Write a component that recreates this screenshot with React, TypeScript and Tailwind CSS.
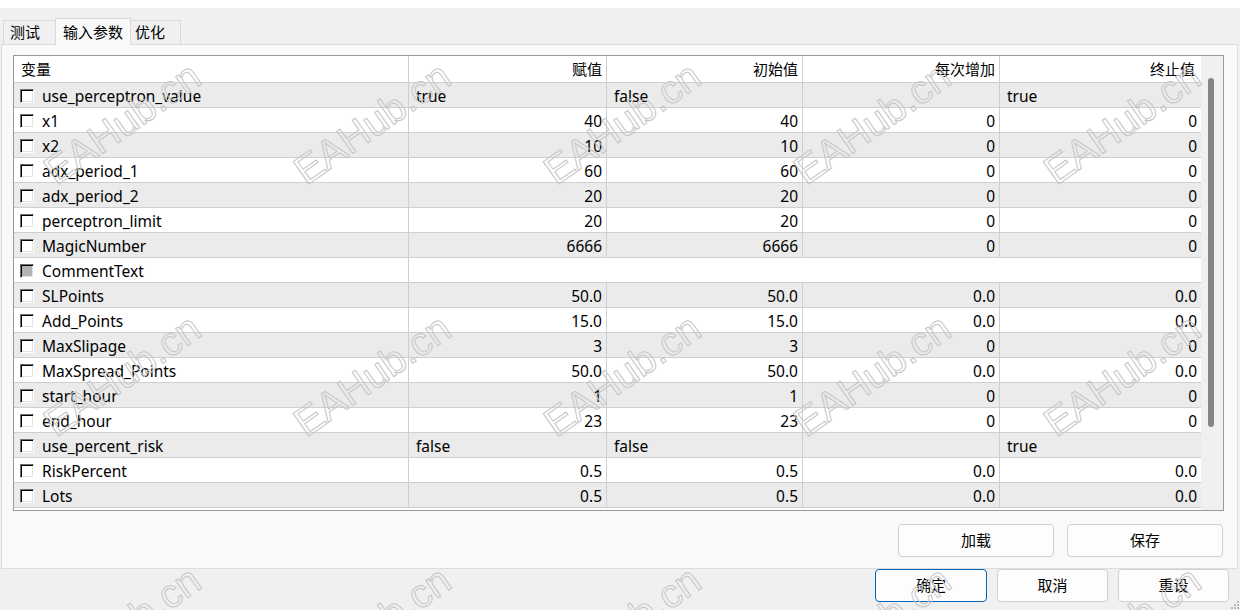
import { FC } from "react";

interface Param {
  name: string;
  value?: string;
  start?: string;
  step?: string;
  stop?: string;
  bool?: boolean;
  text?: boolean;
  disabled?: boolean;
}

const params: Param[] = [
  { name: "use_perceptron_value", value: "true", start: "false", step: "", stop: "true", bool: true },
  { name: "x1", value: "40", start: "40", step: "0", stop: "0" },
  { name: "x2", value: "10", start: "10", step: "0", stop: "0" },
  { name: "adx_period_1", value: "60", start: "60", step: "0", stop: "0" },
  { name: "adx_period_2", value: "20", start: "20", step: "0", stop: "0" },
  { name: "perceptron_limit", value: "20", start: "20", step: "0", stop: "0" },
  { name: "MagicNumber", value: "6666", start: "6666", step: "0", stop: "0" },
  { name: "CommentText", text: true, disabled: true },
  { name: "SLPoints", value: "50.0", start: "50.0", step: "0.0", stop: "0.0" },
  { name: "Add_Points", value: "15.0", start: "15.0", step: "0.0", stop: "0.0" },
  { name: "MaxSlipage", value: "3", start: "3", step: "0", stop: "0" },
  { name: "MaxSpread_Points", value: "50.0", start: "50.0", step: "0.0", stop: "0.0" },
  { name: "start_hour", value: "1", start: "1", step: "0", stop: "0" },
  { name: "end_hour", value: "23", start: "23", step: "0", stop: "0" },
  { name: "use_percent_risk", value: "false", start: "false", step: "", stop: "true", bool: true },
  { name: "RiskPercent", value: "0.5", start: "0.5", step: "0.0", stop: "0.0" },
  { name: "Lots", value: "0.5", start: "0.5", step: "0.0", stop: "0.0" },
];

const cols = "grid grid-cols-[395px_198px_196px_197px_201px]";

// classic sunken checkbox
const CheckBox: FC<{ disabled?: boolean }> = ({ disabled }) => (
  <span
    className={`w-[14px] h-[14px] shrink-0 -mt-[2px] border border-t-[#6e6e6e] border-l-[#6e6e6e] border-b-white border-r-white shadow-[inset_1px_1px_0_#000,inset_-1px_-1px_0_#e3e3e3] ${
      disabled ? "bg-[#b2b2b2]" : "bg-white"
    }`}
  />
);

const Cell: FC<{ text?: string; left?: boolean; last?: boolean; header?: boolean }> = ({
  text,
  left,
  last,
  header,
}) => (
  <div
    className={`flex items-center h-full ${header ? "" : "pt-[2px]"} ${
      left ? "justify-start pl-[7px]" : "justify-end pr-[4px]"
    } ${last ? "" : "border-r border-[#cfcfcf]"}`}
  >
    {text}
  </div>
);

const Row: FC<{ p: Param; index: number }> = ({ p, index }) => (
  <div
    className={`${cols} h-[25px] border-b border-[#cfcfcf] text-[15.5px] ${
      index % 2 === 0 ? "bg-[#ebebeb]" : "bg-white"
    }`}
  >
    <div className="flex items-center gap-[8px] pl-[6px] pt-[2px] border-r border-[#cfcfcf]">
      <CheckBox disabled={p.disabled} />
      <span>{p.name}</span>
    </div>
    {p.text ? (
      <div className="col-span-4" />
    ) : (
      <>
        <Cell text={p.value} left={p.bool} />
        <Cell text={p.start} left={p.bool} />
        <Cell text={p.step} left={p.bool} />
        <Cell text={p.stop} left={p.bool} last />
      </>
    )}
  </div>
);

const Tab: FC<{ label: string; active?: boolean; className: string }> = ({ label, active, className }) => (
  <div
    className={`flex items-center border border-[#d9d9d9] border-b-0 ${
      active ? "h-[27px] -mb-px bg-[#f9f9f9] relative z-10" : "h-[24px] bg-[#f0f0f0]"
    } ${className}`}
  >
    {label}
  </div>
);

const Button: FC<{ label: string; w: string; primary?: boolean }> = ({ label, w, primary }) => (
  <button
    type="button"
    className={`${w} h-[33px] rounded-[4px] bg-[#fdfdfd] border ${
      primary ? "border-[#0067c0]" : "border-[#d0d0d0]"
    } text-black`}
  >
    {label}
  </button>
);

// watermark grid laid over the dialog
const marks: { x: number; y: number }[] = [];
[123, 375, 627].forEach((y) => {
  [122, 372, 622, 872, 1122].forEach((x) => marks.push({ x, y }));
});

const App: FC = () => {
  return (
    <div className="relative w-[1240px] h-[610px] overflow-hidden bg-[#f0f0f0] text-[15px] text-black font-['Noto_Sans','Noto_Sans_CJK_SC',sans-serif]">
      <div className="h-2 bg-white" />

      {/* tabs */}
      <div className="flex items-end h-[36px] pl-[3px] font-['Noto_Sans_CJK_SC',sans-serif]">
        <Tab label="测试" className="w-[53px] pl-[6px]" />
        <Tab label="输入参数" active className="w-[76px] pl-[7px] -ml-px" />
        <Tab label="优化" className="w-[51px] pl-[4px] -ml-px" />
      </div>

      {/* parameters panel */}
      <div className="ml-px w-[1237px] h-[525px] border border-[#dcdcdc] bg-[#f9f9f9] pt-[10px] pl-[11px]">
        <div className="flex w-[1211px] h-[456px] border border-[#9a9a9a] bg-white">
          <div className="w-[1187px]">
            <div className={`${cols} h-[27px] border-b border-[#cfcfcf] bg-white font-['Noto_Sans_CJK_SC',sans-serif]`}>
              <Cell text="变量" left header />
              <Cell text="赋值" header />
              <Cell text="初始值" header />
              <Cell text="每次增加" header />
              <div className="flex items-center justify-end pr-[6px]">终止值</div>
            </div>
            {params.map((p, i) => (
              <Row key={p.name} p={p} index={i} />
            ))}
          </div>
          <div className="w-[22px] bg-[#f0f0f0] pl-[7px] pt-[22px]">
            <div className="w-[6px] h-[349px] rounded-[3px] bg-[#858585]" />
          </div>
        </div>

        <div className="flex justify-end gap-[13px] pr-[14px] mt-[13px] font-['Noto_Sans_CJK_SC',sans-serif]">
          <Button label="加载" w="w-[156px]" />
          <Button label="保存" w="w-[156px]" />
        </div>
      </div>

      {/* dialog buttons */}
      <div className="flex justify-end gap-[10px] pr-[11px] font-['Noto_Sans_CJK_SC',sans-serif]">
        <Button label="确定" w="w-[112px]" primary />
        <Button label="取消" w="w-[111px]" />
        <Button label="重设" w="w-[111px]" />
      </div>

      {/* size grip */}
      <svg className="absolute right-0 bottom-0" width="10" height="10" viewBox="0 0 10 10">
        <rect x="7" y="1" width="2" height="2" fill="#b8b8b8" />
        <rect x="4" y="4" width="2" height="2" fill="#b8b8b8" />
        <rect x="7" y="4" width="2" height="2" fill="#b8b8b8" />
        <rect x="1" y="7" width="2" height="2" fill="#b8b8b8" />
        <rect x="4" y="7" width="2" height="2" fill="#b8b8b8" />
        <rect x="7" y="7" width="2" height="2" fill="#b8b8b8" />
      </svg>

      <div className="absolute inset-0 pointer-events-none">
        {marks.map((m, i) => (
          <span
            key={i}
            className="absolute -translate-x-1/2 -translate-y-1/2 -rotate-[35deg] whitespace-nowrap leading-none text-[40px] font-['Liberation_Sans',sans-serif] text-transparent [-webkit-text-stroke:1px_#c6c6c6]"
            style={{ left: m.x, top: m.y }}
          >
            EAHub.cn
          </span>
        ))}
      </div>
    </div>
  );
};

export default App;
